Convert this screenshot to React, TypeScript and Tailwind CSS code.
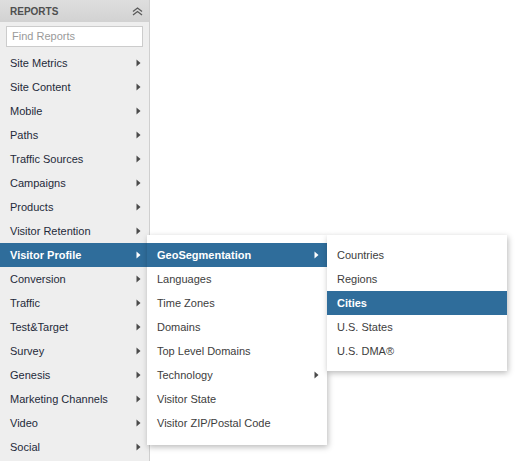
import React from 'react';

const reports = [
    'Site Metrics',
    'Site Content',
    'Mobile',
    'Paths',
    'Traffic Sources',
    'Campaigns',
    'Products',
    'Visitor Retention',
    'Visitor Profile',
    'Conversion',
    'Traffic',
    'Test&Target',
    'Survey',
    'Genesis',
    'Marketing Channels',
    'Video',
    'Social'
];

const profileItems: {label: string; sub?: boolean}[] = [
    {label: 'GeoSegmentation', sub: true},
    {label: 'Languages'},
    {label: 'Time Zones'},
    {label: 'Domains'},
    {label: 'Top Level Domains'},
    {label: 'Technology', sub: true},
    {label: 'Visitor State'},
    {label: 'Visitor ZIP/Postal Code'}
];

const geoItems = ['Countries', 'Regions', 'Cities', 'U.S. States', 'U.S. DMA®'];

const Arrow: React.FC<{light?: boolean}> = ({light}) => (
    <svg width="5" height="8" viewBox="0 0 5 8" className="shrink-0">
        <path d="M0.5 0.5 L4.5 4 L0.5 7.5 Z" fill={light ? '#ffffff' : '#4a4a4a'} />
    </svg>
);

const App: React.FC = () => {
    return (
        <div className="relative h-[461px] w-[517px] bg-white font-['Liberation_Sans',Arial,sans-serif] text-[11px]">
            <div className="flex h-full w-[150px] flex-col border-r border-[#cfcfcf] bg-[#eeeeee]">
                <div className="flex h-[22px] items-center justify-between bg-gradient-to-b from-[#dedede] to-[#d2d2d2] pr-[6px] pl-[10px]">
                    <span className="text-[10px] font-bold text-[#4f4f4f]">REPORTS</span>
                    <svg width="11" height="9" viewBox="0 0 11 9">
                        <path d="M1 4.5 L5.5 1 L10 4.5 M1 8 L5.5 4.5 L10 8" fill="none" stroke="#5a5a5a" strokeWidth="1.3" />
                    </svg>
                </div>
                <div className="px-[6px] pt-[4px] pb-[4px]">
                    <div className="flex h-[21px] items-center border border-[#cccccc] bg-white px-[5px] text-[#9a9a9a]">
                        Find Reports
                    </div>
                </div>
                {reports.map(name => {
                    const active = name === 'Visitor Profile';
                    return (
                        <div
                            key={name}
                            className={`flex h-[24px] items-center justify-between pr-[8px] pl-[10px] ${
                                active ? 'bg-[#2f6d9b] font-bold text-white' : 'text-[#1e2a3a]'
                            }`}
                        >
                            <span>{name}</span>
                            <Arrow light={active} />
                        </div>
                    );
                })}
            </div>

            {/* Visitor Profile flyout */}
            <div className="absolute top-[235px] left-[147px] w-[180px] bg-white pt-[8px] pb-[10px] shadow-[1px_2px_6px_rgba(0,0,0,0.28)]">
                {profileItems.map(item => {
                    const active = item.label === 'GeoSegmentation';
                    return (
                        <div
                            key={item.label}
                            className={`flex h-[24px] items-center justify-between pr-[8px] pl-[10px] ${
                                active ? 'bg-[#2f6d9b] font-bold text-white' : 'text-[#3d3d3d]'
                            }`}
                        >
                            <span>{item.label}</span>
                            {item.sub && <Arrow light={active} />}
                        </div>
                    );
                })}
            </div>

            {/* GeoSegmentation flyout */}
            <div className="absolute top-[235px] left-[327px] w-[180px] bg-white pt-[8px] pb-[8px] shadow-[1px_2px_6px_rgba(0,0,0,0.28)]">
                {geoItems.map(label => {
                    const active = label === 'Cities';
                    return (
                        <div
                            key={label}
                            className={`flex h-[24px] items-center pl-[10px] ${
                                active ? 'bg-[#2f6d9b] font-bold text-white' : 'text-[#3d3d3d]'
                            }`}
                        >
                            {label}
                        </div>
                    );
                })}
            </div>
        </div>
    );
};

export default App;
